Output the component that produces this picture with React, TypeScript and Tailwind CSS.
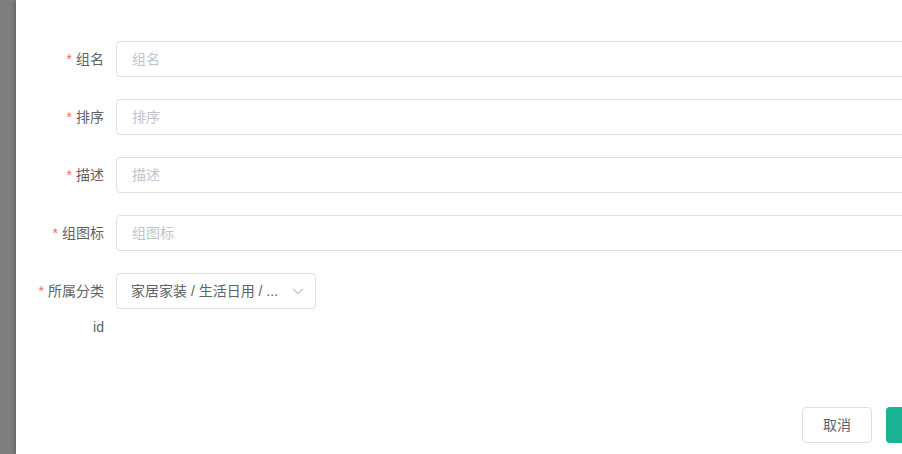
const fields = [
  { label: "组名", placeholder: "组名" },
  { label: "排序", placeholder: "排序" },
  { label: "描述", placeholder: "描述" },
  { label: "组图标", placeholder: "组图标" },
];

function Label({ text, required }: { text: string; required?: boolean }) {
  return (
    <label className="w-[100px] shrink-0 pr-3 text-right text-sm leading-[36px] text-[#606266]">
      {required && <span className="mr-1 text-[#f56c6c]">*</span>}
      {text}
    </label>
  );
}

export default function App() {
  return (
    <div
      className="flex h-[454px] w-[902px] overflow-hidden bg-[#7f7f7f]"
      style={{ fontFamily: '"Helvetica Neue", "Liberation Sans", "Noto Sans CJK SC", sans-serif' }}
    >
      <div className="w-4 shrink-0" />
      <div className="flex-1 overflow-hidden bg-white shadow-[-2px_0_4px_rgba(0,0,0,0.2)]">
        <form className="w-[1100px] pt-[41px]">
          {fields.map((f) => (
            <div key={f.label} className="mb-[22px] flex">
              <Label text={f.label} required />
              <input
                placeholder={f.placeholder}
                className="h-9 w-[900px] rounded border border-[#dcdfe6] px-[15px] text-sm text-[#606266] outline-none placeholder:text-[#c0c4cc]"
              />
            </div>
          ))}

          <div className="flex">
            <Label text="所属分类" required />
            <div className="flex h-9 w-[200px] items-center rounded border border-[#dcdfe6] pl-[14px] pr-[10px] text-sm text-[#606266]">
              <span className="flex-1 truncate">家居家装 / 生活日用 / ...</span>
              <svg width="14" height="14" viewBox="0 0 14 14" fill="none" className="ml-1">
                <path d="M2 5l5 4.5L12 5" stroke="#c0c4cc" strokeWidth="1.1" />
              </svg>
            </div>
          </div>

          <div className="flex">
            <Label text="id" />
          </div>

          <div className="mt-[62px] flex gap-[14px] pl-[786px]">
            <button
              type="button"
              className="h-9 w-[70px] rounded border border-[#dcdfe6] bg-white text-sm text-[#606266]"
            >
              取消
            </button>
            <button
              type="button"
              className="h-9 w-[70px] rounded bg-[#1ab394] text-sm text-white"
            >
              确定
            </button>
          </div>
        </form>
      </div>
    </div>
  );
}
